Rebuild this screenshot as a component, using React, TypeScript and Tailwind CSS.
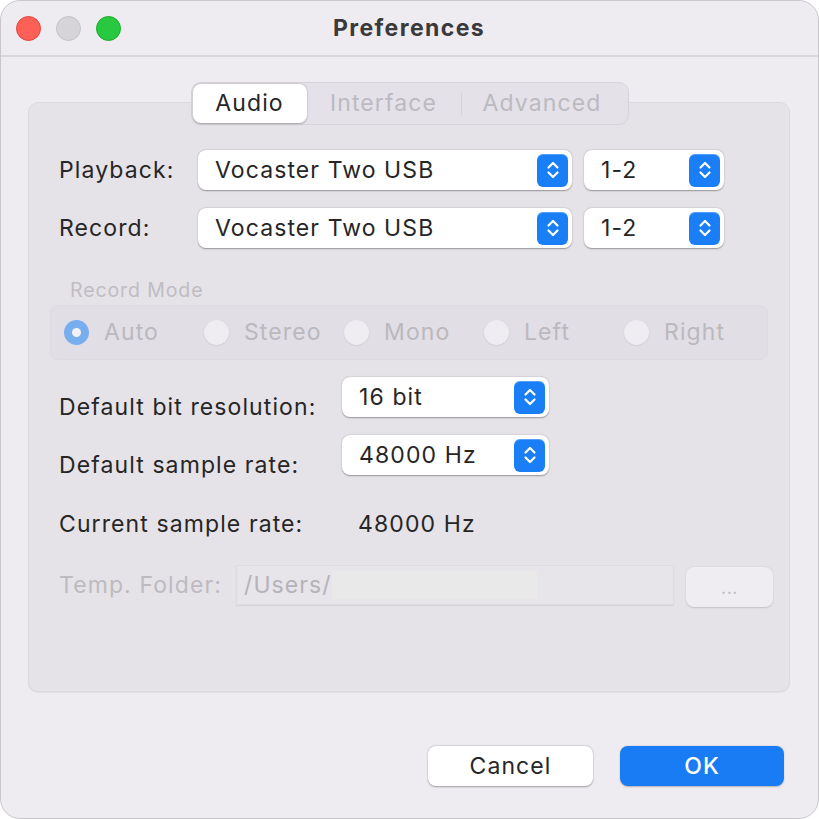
import React from "react";

const font = { fontFamily: "Inter, 'Liberation Sans', sans-serif" };

function Stepper() {
  return (
    <div className="w-[31px] h-[33px] rounded-[6px] bg-[#1a7ef6] flex items-center justify-center shadow-[inset_0_1px_0_rgba(255,255,255,0.25)]">
      <svg width="14" height="22" viewBox="0 0 14 22" fill="none" stroke="white" strokeWidth="2.2" strokeLinecap="round" strokeLinejoin="round">
        <path d="M2.5 8.5 L7 4 L11.5 8.5" />
        <path d="M2.5 13.5 L7 18 L11.5 13.5" />
      </svg>
    </div>
  );
}

function Popup({ text, w }: { text: string; w: string }) {
  return (
    <div className={`${w} shrink-0 h-[40px] bg-white rounded-[8px] shadow-[0_0.5px_1.5px_rgba(0,0,0,0.35)] flex items-center justify-between pl-[17px] pr-[4px]`}>
      <span className="text-[#262626] leading-none">{text}</span>
      <Stepper />
    </div>
  );
}

function Radio({ label, selected }: { label: string; selected?: boolean }) {
  return (
    <div className="w-[140px] shrink-0 flex items-center gap-[15px]">
      {selected ? (
        <div className="w-[25px] h-[25px] rounded-full bg-[#78aef0] flex items-center justify-center shrink-0">
          <div className="w-[9px] h-[9px] rounded-full bg-[#f2f1f5]" />
        </div>
      ) : (
        <div className="w-[25px] h-[25px] rounded-full bg-[#efedf2] shadow-[0_0.5px_1.5px_rgba(0,0,0,0.12)] shrink-0" />
      )}
      <span className="text-[#bbb9be] leading-none">{label}</span>
    </div>
  );
}

export default function App() {
  return (
    <div style={font} className="w-[819px] h-[819px] bg-[#efecf1] rounded-[20px] border border-[#c9c7cc] flex flex-col overflow-hidden text-[#262626] text-[23px] tracking-[1.1px]">
      {/* Title bar */}
      <div className="h-[56px] border-b-2 border-[#d9d7dc] grid grid-cols-[1fr_auto_1fr] items-center shrink-0">
        <div className="flex items-center gap-[15px] pl-[15px]">
          <div className="w-[25px] h-[25px] rounded-full bg-[#fe5f57] border border-[#e0443e]" />
          <div className="w-[25px] h-[25px] rounded-full bg-[#d6d4d9] border border-[#c3c1c6]" />
          <div className="w-[25px] h-[25px] rounded-full bg-[#28c840] border border-[#1aab29]" />
        </div>
        <div className="text-[23px] font-bold tracking-[1.4px] text-[#3a393c] leading-none pr-[1px]">Preferences</div>
        <div />
      </div>

      {/* Tabs */}
      <div className="flex justify-center mt-[25px] relative z-10">
        <div className="h-[43px] w-[438px] rounded-[10px] bg-[#e4e1e8] border border-[#d6d3da] flex items-center px-[1px]">
          <div className="w-[114px] h-[39px] bg-white rounded-[8px] shadow-[0_0.5px_2px_rgba(0,0,0,0.3)] flex items-center justify-center text-[#262626]">
            Audio
          </div>
          <div className="w-[154px] flex items-center justify-center text-[#bcbac0]">Interface</div>
          <div className="w-[1px] h-[22px] bg-[#d3d0d6]" />
          <div className="flex-1 flex items-center justify-center text-[#bcbac0] pr-[4px]">Advanced</div>
        </div>
      </div>

      {/* Group box */}
      <div className="-mt-[23px] ml-[27px] w-[762px] h-[590px] rounded-[10px] bg-[#e5e2e8] border border-[#dbd8de] shadow-[0_1px_1px_rgba(0,0,0,0.06)] pt-[47px] px-[21px] flex flex-col">
        <div className="flex items-center h-[40px] ml-[9px]">
          <div className="w-[139px] shrink-0">Playback:</div>
          <Popup text="Vocaster Two USB" w="w-[374px]" />
          <div className="w-[12px] shrink-0" />
          <Popup text="1-2" w="w-[140px]" />
        </div>
        <div className="flex items-center h-[40px] ml-[9px] mt-[18px]">
          <div className="w-[139px] shrink-0">Record:</div>
          <Popup text="Vocaster Two USB" w="w-[374px]" />
          <div className="w-[12px] shrink-0" />
          <Popup text="1-2" w="w-[140px]" />
        </div>

        <div className="mt-[31px] ml-[20px] h-[24px] flex items-center text-[19.5px] tracking-[0.9px] text-[#bfbdc2]">Record Mode</div>
        <div className="mt-[2px] w-[718px] h-[55px] rounded-[8px] bg-[#e1dee5] border border-[#dddae0] flex items-center pl-[13px]">
          <Radio label="Auto" selected />
          <Radio label="Stereo" />
          <Radio label="Mono" />
          <Radio label="Left" />
          <Radio label="Right" />
        </div>

        <div className="flex items-center h-[40px] ml-[9px] mt-[17px]">
          <div className="w-[283px] shrink-0 pt-[20px]">Default bit resolution:</div>
          <Popup text="16 bit" w="w-[207px]" />
        </div>
        <div className="flex items-center h-[40px] ml-[9px] mt-[18px]">
          <div className="w-[283px] shrink-0 pt-[20px]">Default sample rate:</div>
          <Popup text="48000 Hz" w="w-[207px]" />
        </div>
        <div className="flex items-center h-[40px] ml-[9px] mt-[29px]">
          <div className="w-[299px] shrink-0">Current sample rate:</div>
          <div>48000 Hz</div>
        </div>

        <div className="flex items-start ml-[9px] mt-[21px]">
          <div className="w-[177px] shrink-0 h-[40px] flex items-center text-[#bdbbc0]">Temp. Folder:</div>
          <div className="w-[438px] shrink-0 h-[40px] bg-[#e7e4ea] border border-[#dedbe1] shadow-[0_1px_1px_rgba(0,0,0,0.06)] flex items-center pl-[7px]">
            <span className="text-[#b5b3b8]">/Users/</span>
            <span className="w-[205px] h-[28px] bg-[#e9e9ea]" />
          </div>
          <div className="w-[12px] shrink-0" />
          <div className="mt-[2px] shrink-0 w-[87px] h-[40px] rounded-[8px] bg-[#efedf2] shadow-[0_0.5px_1.5px_rgba(0,0,0,0.15)] flex items-end justify-center pb-[10px] text-[18px] tracking-[0.5px] text-[#bdbbc0] leading-none">
            ...
          </div>
        </div>
      </div>

      {/* Buttons */}
      <div className="flex justify-end gap-[27px] pr-[34px] mt-[54px]">
        <div className="w-[165px] h-[40px] bg-white rounded-[8px] shadow-[0_0.5px_2px_rgba(0,0,0,0.35)] flex items-center justify-center text-[#262626]">
          Cancel
        </div>
        <div className="w-[164px] h-[40px] bg-[#1a7cf5] rounded-[8px] shadow-[0_0.5px_1.5px_rgba(0,0,0,0.25)] flex items-center justify-center font-medium text-white">
          OK
        </div>
      </div>
    </div>
  );
}
